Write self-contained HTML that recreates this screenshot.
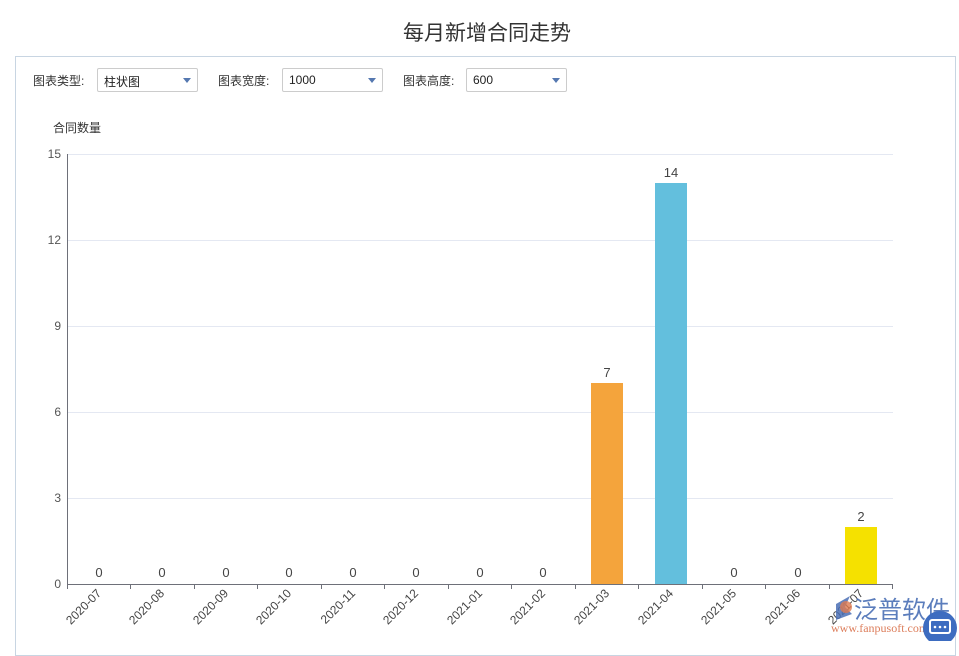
<!DOCTYPE html>
<html><head><meta charset="utf-8">
<style>
html,body{margin:0;padding:0;width:959px;height:641px;overflow:hidden;background:#fff;font-family:"Liberation Sans","Noto Sans CJK SC",sans-serif;}
.title{position:absolute;top:17px;left:0;width:974px;text-align:center;font-size:21px;color:#333;}
.panel{position:absolute;left:15px;top:56px;width:941px;height:600px;border:1px solid #c8d5e2;box-sizing:border-box;}
.lbl{position:absolute;top:72px;font-size:12px;color:#333;}
.sel{position:absolute;top:68px;height:24px;width:101px;border:1px solid #ccc;border-radius:2px;box-sizing:border-box;font-size:12px;color:#222;padding:4px 0 0 6px;}
.sel:after{content:"";position:absolute;right:6px;top:9px;border-left:4px solid transparent;border-right:4px solid transparent;border-top:5px solid #5578b0;}
</style></head><body>
<div class="title">每月新增合同走势</div>
<div class="panel"></div>
<div class="lbl" style="left:33px">图表类型:</div>
<div class="sel" style="left:97px">柱状图</div>
<div class="lbl" style="left:218px">图表宽度:</div>
<div class="sel" style="left:282px">1000</div>
<div class="lbl" style="left:403px">图表高度:</div>
<div class="sel" style="left:466px">600</div>
<svg width="959" height="641" style="position:absolute;left:0;top:0" font-family="Liberation Sans, Noto Sans CJK SC, sans-serif">
<text x="53" y="132" font-size="12" fill="#333">合同数量</text>
<g stroke="#e4e8f2" stroke-width="1">
<line x1="67" x2="893" y1="154.5" y2="154.5"/><line x1="67" x2="893" y1="240.5" y2="240.5"/>
<line x1="67" x2="893" y1="326.5" y2="326.5"/><line x1="67" x2="893" y1="412.5" y2="412.5"/>
<line x1="67" x2="893" y1="498.5" y2="498.5"/></g>
<g font-size="12" fill="#555" text-anchor="end">
<text x="61" y="158">15</text><text x="61" y="244">12</text><text x="61" y="330">9</text>
<text x="61" y="416">6</text><text x="61" y="502">3</text><text x="61" y="588">0</text></g>
<line x1="67.5" x2="67.5" y1="154" y2="584" stroke="#6e7079"/>
<line x1="67" x2="893" y1="584.5" y2="584.5" stroke="#6e7079"/>
<g stroke="#6e7079">
<line x1="67.5" x2="67.5" y1="584" y2="589"/><line x1="130.5" x2="130.5" y1="584" y2="589"/><line x1="194.5" x2="194.5" y1="584" y2="589"/><line x1="257.5" x2="257.5" y1="584" y2="589"/><line x1="321.5" x2="321.5" y1="584" y2="589"/><line x1="384.5" x2="384.5" y1="584" y2="589"/><line x1="448.5" x2="448.5" y1="584" y2="589"/><line x1="511.5" x2="511.5" y1="584" y2="589"/><line x1="575.5" x2="575.5" y1="584" y2="589"/><line x1="638.5" x2="638.5" y1="584" y2="589"/><line x1="702.5" x2="702.5" y1="584" y2="589"/><line x1="765.5" x2="765.5" y1="584" y2="589"/><line x1="829.5" x2="829.5" y1="584" y2="589"/><line x1="892.5" x2="892.5" y1="584" y2="589"/></g>
<rect x="591" y="383" width="32" height="201" fill="#f4a43c"/>
<rect x="655" y="183" width="32" height="401" fill="#63bfdd"/>
<rect x="845" y="527" width="32" height="57" fill="#f5e100"/>
<g font-size="13" fill="#444" text-anchor="middle">
<text x="99" y="577">0</text><text x="162" y="577">0</text><text x="226" y="577">0</text><text x="289" y="577">0</text><text x="353" y="577">0</text><text x="416" y="577">0</text><text x="480" y="577">0</text><text x="543" y="577">0</text><text x="607" y="377">7</text><text x="671" y="177">14</text><text x="734" y="577">0</text><text x="798" y="577">0</text><text x="861" y="521">2</text></g>
<g font-size="12" fill="#444" text-anchor="end">
<text transform="translate(102,594) rotate(-45)">2020-07</text>
<text transform="translate(165,594) rotate(-45)">2020-08</text>
<text transform="translate(229,594) rotate(-45)">2020-09</text>
<text transform="translate(292,594) rotate(-45)">2020-10</text>
<text transform="translate(356,594) rotate(-45)">2020-11</text>
<text transform="translate(419,594) rotate(-45)">2020-12</text>
<text transform="translate(483,594) rotate(-45)">2021-01</text>
<text transform="translate(546,594) rotate(-45)">2021-02</text>
<text transform="translate(610,594) rotate(-45)">2021-03</text>
<text transform="translate(674,594) rotate(-45)">2021-04</text>
<text transform="translate(737,594) rotate(-45)">2021-05</text>
<text transform="translate(801,594) rotate(-45)">2021-06</text>
<text transform="translate(864,594) rotate(-45)">2021-07</text></g>
<path d="M836 604 L850 596 L845 607 L852 614 L836 620 Z" fill="#4a6fb5" opacity="0.85"/>
<circle cx="846" cy="607" r="6" fill="#e07a50" opacity="0.8"/>
<text x="854" y="618" font-size="24" fill="#4a6fb5" opacity="0.9">泛普软件</text>
<text x="831" y="632" font-size="12" fill="#d9704a" font-family="Liberation Serif, serif" opacity="0.9">www.fanpusoft.com</text>
<circle cx="940" cy="628" r="17" fill="#3d6cc0"/>
<rect x="930" y="620" width="20" height="13" rx="2" fill="none" stroke="#fff" stroke-width="2"/>
<circle cx="935" cy="627" r="1.3" fill="#fff"/><circle cx="940" cy="627" r="1.3" fill="#fff"/><circle cx="945" cy="627" r="1.3" fill="#fff"/>
</svg>
</body></html>
